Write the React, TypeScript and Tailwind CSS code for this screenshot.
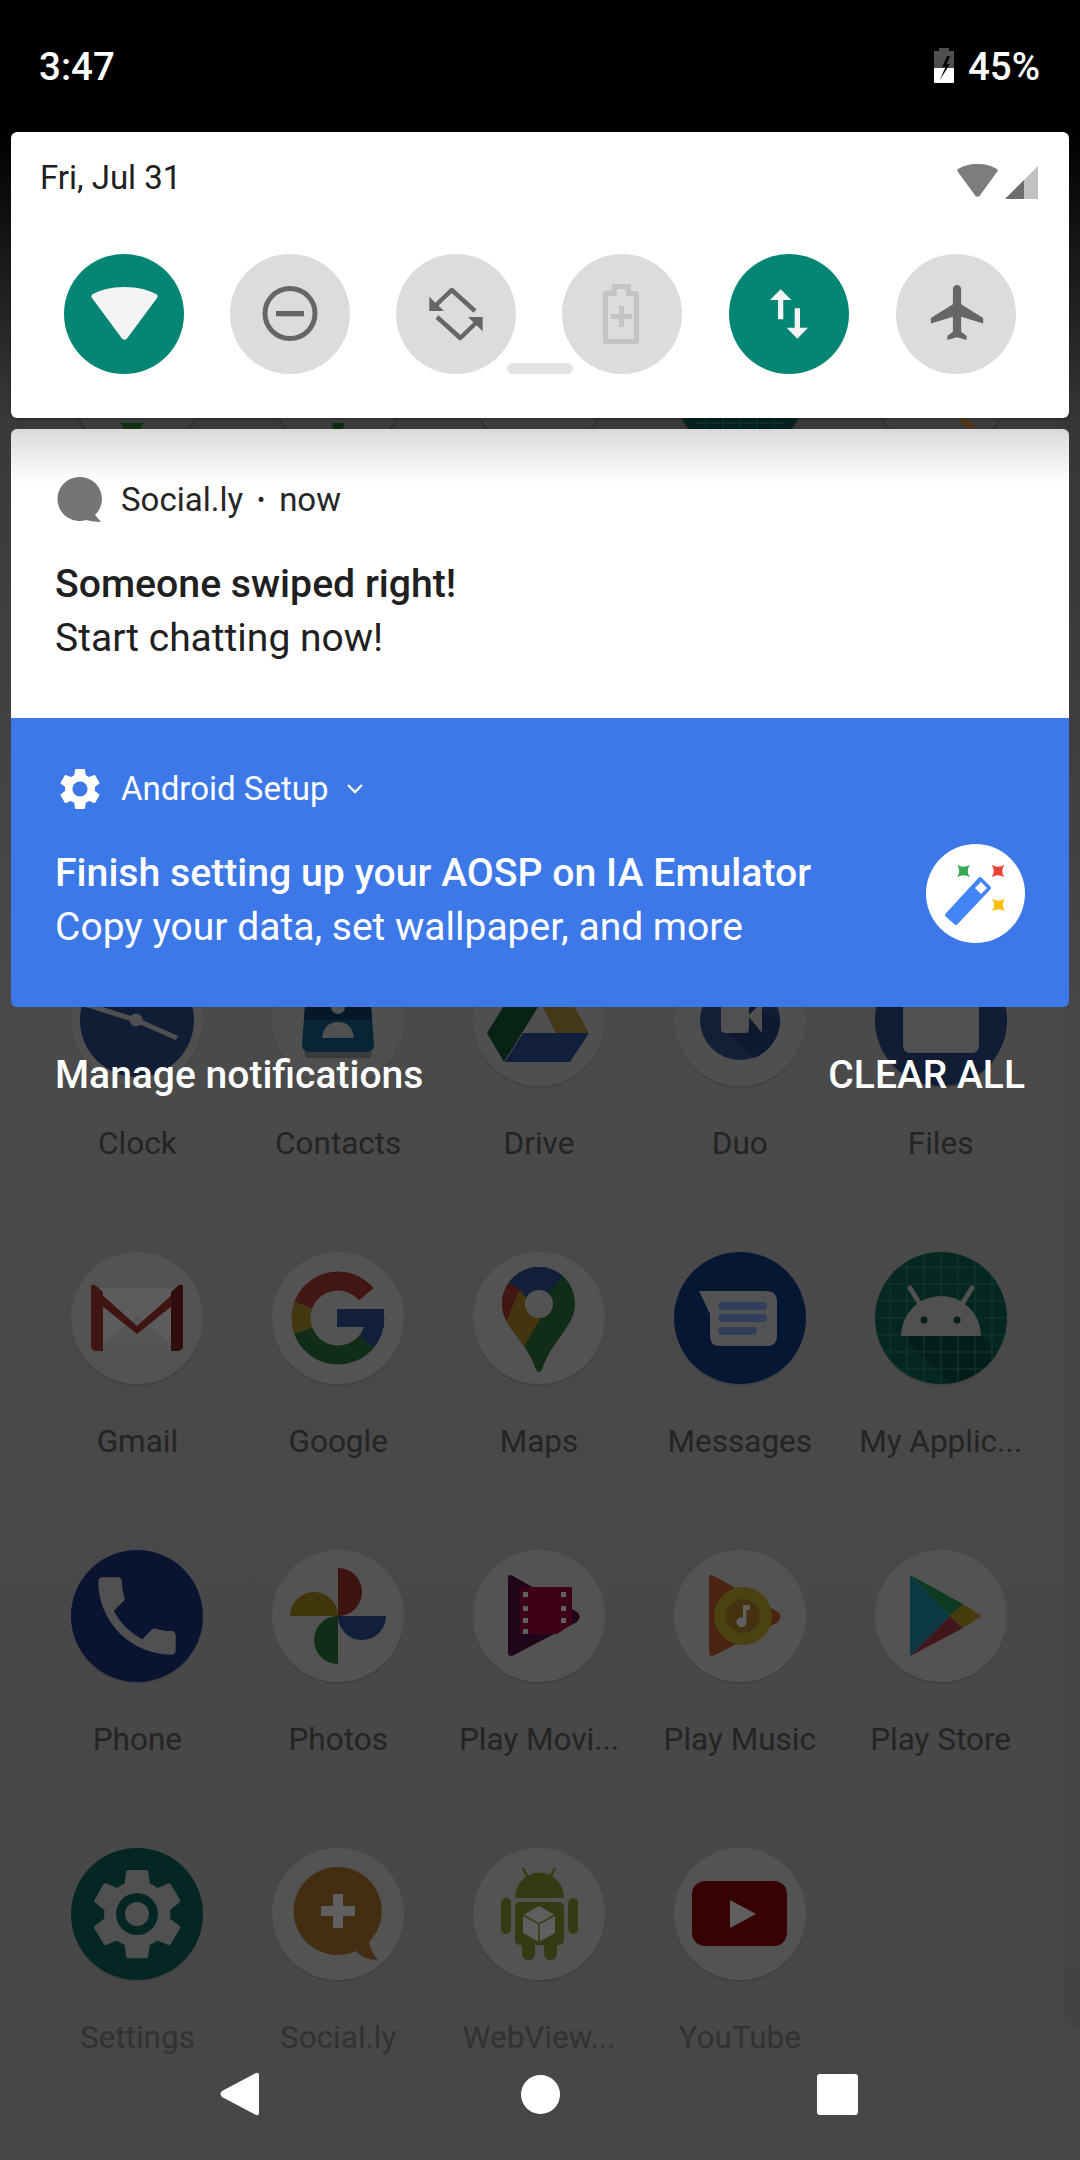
import React from "react";

const GEAR =
  "M19.14 12.94c.04-.3.06-.61.06-.94 0-.32-.02-.64-.07-.94l2.03-1.58c.18-.14.23-.41.12-.61l-1.92-3.32c-.12-.22-.37-.29-.59-.22l-2.39.96c-.5-.38-1.03-.7-1.62-.94l-.36-2.54c-.04-.24-.24-.41-.48-.41h-3.84c-.24 0-.43.17-.47.41l-.36 2.54c-.59.24-1.13.57-1.62.94l-2.39-.96c-.22-.08-.47 0-.59.22L2.74 8.87c-.12.21-.08.47.12.61l2.03 1.58c-.05.3-.09.63-.09.94s.02.64.07.94l-2.03 1.58c-.18.14-.23.41-.12.61l1.92 3.32c.12.22.37.29.59.22l2.39-.96c.5.38 1.03.7 1.62.94l.36 2.54c.05.24.24.41.48.41h3.84c.24 0 .44-.17.47-.41l.36-2.54c.59-.24 1.13-.56 1.62-.94l2.39.96c.22.08.47 0 .59-.22l1.92-3.32c.12-.22.07-.47-.12-.61l-2.01-1.58zM12 15.6c-1.98 0-3.6-1.62-3.6-3.6s1.62-3.6 3.6-3.6 3.6 1.62 3.6 3.6-1.62 3.6-3.6 3.6z";

const DISC = "#626262";
const ROW1 = "#5d5d5d";
const GLYPH = "#5e5e5e";
const LIGHT = "#707070";

function Icon({ children, disc = DISC }: { children?: React.ReactNode; disc?: string }) {
  return (
    <svg viewBox="0 0 132 136" className="h-[136px] w-[132px] shrink-0 brightness-[0.85] saturate-[0.85]">
      <circle cx="66" cy="68" r="66" fill="#000" opacity="0.1" />
      <circle cx="66" cy="66" r="66" fill={disc} />
      {children}
    </svg>
  );
}

const icons: Record<string, React.ReactNode> = {
  Clock: (
    <Icon disc={ROW1}>
      <circle cx="66" cy="66" r="57" fill="#112244" />
      <path d="M0 46 L65 66 L106 84" stroke={GLYPH} strokeWidth="5" fill="none" />
      <circle cx="65" cy="66" r="6.5" fill={GLYPH} />
    </Icon>
  ),
  Contacts: (
    <Icon disc={ROW1}>
      <path d="M37 0 H95 L102 90 Q102 98 95 98 H37 Q30 98 30 90 Z" fill="#042d45" />
      <path d="M37 0 H95 L100 66 H32 Z" fill="#041d31" />
      <path d="M32 98 H100 L98 104 H34 Z" fill="#444" />
      <circle cx="66" cy="53" r="7" fill={GLYPH} />
      <path d="M50 84 Q52 68 66 68 Q80 68 82 84 Z" fill={GLYPH} />
    </Icon>
  ),
  Drive: (
    <Icon disc={ROW1}>
      <polygon points="52,18 14,79 31,108 70,45" fill="#052918" />
      <polygon points="52,18 82,18 116,79 83,79" fill="#534214" />
      <polygon points="32,108 97,108 116,79 50,79" fill="#11254a" />
    </Icon>
  ),
  Duo: (
    <Icon disc={ROW1}>
      <circle cx="66" cy="66" r="40" fill="#132546" />
      <path d="M76 50 L106 66 A40 40 0 0 1 80 104 L50 76 Z" fill="#0e1e3c" />
      <rect x="47" y="46" width="28" height="33" rx="4" fill={GLYPH} />
      <polygon points="74,62 88,48 88,79" fill={GLYPH} />
    </Icon>
  ),
  Files: (
    <Icon disc="#112244">
      <rect x="28" y="30" width="76" height="69" rx="7" fill={GLYPH} />
    </Icon>
  ),
  Gmail: (
    <Icon>
      <rect x="24" y="36" width="84" height="62" fill="#6c6c6c" />
      <polygon points="24,98 66,64 108,98" fill="#646464" />
      <path d="M20 33 L66 74 L112 33 V45 L66 82 L20 45 Z" fill="#531613" />
      <path d="M20 36 Q20 32 24 33 L32 40 V99 H26 Q20 99 20 93 Z" fill="#531613" />
      <path d="M112 36 Q112 32 108 33 L100 40 V99 H106 Q112 99 112 93 Z" fill="#3b0e0c" />
    </Icon>
  ),
  Google: (
    <Icon>
      <g fill="none" strokeWidth="19">
        <path d="M94.3 42.2 A37 37 0 0 0 31.2 53.3" stroke="#541814" />
        <path d="M31.2 53.3 A37 37 0 0 0 31.2 78.7" stroke="#53420c" />
        <path d="M31.2 78.7 A37 37 0 0 0 94.3 89.8" stroke="#103618" />
        <path d="M94.3 89.8 A37 37 0 0 0 103 66" stroke="#11254b" />
      </g>
      <rect x="65" y="57" width="47" height="18" fill="#11254b" />
    </Icon>
  ),
  Maps: (
    <Icon>
      <defs>
        <clipPath id="pin">
          <path d="M66 15 C45 15 29 32 29 52 C29 75 55 90 63 118 Q66 122 69 118 C77 90 102 75 102 52 C102 32 87 15 66 15Z" />
        </clipPath>
      </defs>
      <g clipPath="url(#pin)">
        <rect x="20" y="0" width="100" height="130" fill="#103618" />
        <polygon points="20,0 110,0 60,60 30,35" fill="#11254a" />
        <polygon points="20,20 50,40 38,80 20,80" fill="#541814" />
        <polygon points="46,38 70,62 50,96 30,78" fill="#533e09" />
      </g>
      <circle cx="66" cy="52" r="14" fill={DISC} />
    </Icon>
  ),
  Messages: (
    <Icon disc="#041b42">
      <path d="M25 39 H92 Q103 39 103 50 V84 Q103 94 93 94 H46 Q36 94 36 84 V62 Z" fill={DISC} />
      <rect x="44" y="50" width="49" height="8" rx="4" fill="#384a70" />
      <rect x="44" y="62" width="49" height="8" rx="4" fill="#384a70" />
      <rect x="44" y="75" width="39" height="8" rx="4" fill="#384a70" />
    </Icon>
  ),
  "My Applic...": (
    <Icon disc="#002f28">
      <defs>
        <clipPath id="gridClip">
          <circle cx="66" cy="66" r="66" />
        </clipPath>
      </defs>
      <g clipPath="url(#gridClip)">
        <path d="M26 84 L74 132 H132 V110 L106 84 Z" fill="#002620" />
        <g stroke="#15453d" strokeWidth="1">
          <path d="M15 0 V132 M32 0 V132 M49 0 V132 M66 0 V132 M83 0 V132 M100 0 V132 M117 0 V132" />
          <path d="M0 15 H132 M0 32 H132 M0 49 H132 M0 66 H132 M0 83 H132 M0 100 H132 M0 117 H132" />
        </g>
      </g>
      <path d="M26 84 A40 40 0 0 1 106 84 Z" fill={GLYPH} />
      <path d="M35 36 L45 52 M97 36 L87 52" stroke={GLYPH} strokeWidth="5" strokeLinecap="round" />
      <circle cx="49" cy="68" r="3.5" fill="#002620" />
      <circle cx="82" cy="68" r="3.5" fill="#002620" />
    </Icon>
  ),
  Phone: (
    <Icon disc="#0a1840">
      <g transform="translate(14.4 14.4) scale(4.3)">
        <path
          fill={GLYPH}
          d="M6.62 10.79c1.44 2.83 3.76 5.14 6.59 6.59l2.2-2.2c.27-.27.67-.36 1.02-.24 1.12.37 2.33.57 3.57.57.55 0 1 .45 1 1V20c0 .55-.45 1-1 1-9.39 0-17-7.61-17-17 0-.55.45-1 1-1h3.5c.55 0 1 .45 1 1 0 1.25.2 2.45.57 3.57.11.35.03.74-.25 1.02l-2.2 2.2z"
        />
      </g>
    </Icon>
  ),
  Photos: (
    <Icon>
      <path d="M66 66 V18 A24 24 0 0 1 66 66Z" fill="#4f1610" />
      <path d="M66 66 H114 A24 24 0 0 1 66 66Z" fill="#11254b" />
      <path d="M66 66 V114 A24 24 0 0 1 66 66Z" fill="#0f3618" />
      <path d="M66 66 H18 A24 24 0 0 1 66 66Z" fill="#4f3e04" />
    </Icon>
  ),
  "Play Movi...": (
    <Icon>
      <path d="M35 29 Q35 23 40 26 L104 62 Q109 66 104 72 L41 105 Q35 108 35 102 Z" fill="#2a0620" />
      <polygon points="47,37 99,37 99,74 84,84 47,84" fill="#52001b" />
      <g fill={LIGHT}>
        <rect x="50" y="42" width="5" height="5" />
        <rect x="50" y="56" width="5" height="5" />
        <rect x="50" y="68" width="5" height="5" />
        <rect x="50" y="79" width="5" height="5" />
        <rect x="88" y="42" width="5" height="5" />
        <rect x="88" y="56" width="5" height="5" />
        <rect x="88" y="68" width="5" height="5" />
      </g>
    </Icon>
  ),
  "Play Music": (
    <Icon>
      <path d="M35 29 Q35 23 40 26 L104 62 Q109 66 104 72 L41 105 Q35 108 35 102 Z" fill="#5f2810" />
      <circle cx="69" cy="66" r="29" fill="#5b4e0c" />
      <circle cx="69" cy="66" r="17" fill="#533a0c" />
      <path d="M69 55 H76 V60 H72.5 V72 A5 5 0 1 1 69 67.5 Z" fill={LIGHT} />
    </Icon>
  ),
  "Play Store": (
    <Icon>
      <polygon points="35,25 35,106 75,66" fill="#044553" />
      <polygon points="35,25 88,54 75,66" fill="#084625" />
      <polygon points="35,106 75,66 88,78" fill="#541821" />
      <polygon points="75,66 88,54 107,66 88,78" fill="#534606" />
    </Icon>
  ),
  Settings: (
    <Icon disc="#002f2c">
      <g transform="translate(11 11) scale(4.6)">
        <path fill={GLYPH} d={GEAR} />
      </g>
      <circle cx="66" cy="66" r="21" fill="#002f2c" />
      <circle cx="66" cy="66" r="12" fill={GLYPH} />
    </Icon>
  ),
  "Social.ly": (
    <Icon>
      <path d="M66 19 A44 44 0 0 1 97 94 Q100 106 106 112 Q92 112 84 103 A44 44 0 1 1 66 19Z" fill="#53350f" />
      <rect x="49" y="58" width="34" height="10" fill={LIGHT} />
      <rect x="61" y="46" width="10" height="34" fill={LIGHT} />
    </Icon>
  ),
  "WebView...": (
    <Icon>
      <path d="M50 20 L55 30 M82 20 L77 30" stroke="#3b460e" strokeWidth="2.5" />
      <path d="M42 50 A24 25 0 0 1 91 50 Z" fill="#3b460e" />
      <rect x="42" y="54" width="49" height="43" rx="5" fill="#3b460e" />
      <rect x="28" y="50" width="10" height="36" rx="5" fill="#3b460e" />
      <rect x="95" y="50" width="10" height="36" rx="5" fill="#3b460e" />
      <rect x="49" y="90" width="13" height="22" rx="6" fill="#3b460e" />
      <rect x="71" y="90" width="13" height="22" rx="6" fill="#3b460e" />
      <polygon points="66,58 82,67 82,85 66,94 50,85 50,67" fill={LIGHT} />
      <path d="M50 67 L66 76 L82 67 M66 76 V94" stroke="#3b460e" strokeWidth="1.5" fill="none" />
    </Icon>
  ),
  YouTube: (
    <Icon>
      <rect x="18" y="33" width="95" height="65" rx="13" fill="#4a0000" />
      <polygon points="56,52 82,66 56,80" fill={LIGHT} />
    </Icon>
  ),
};

const rows = [
  ["Clock", "Contacts", "Drive", "Duo", "Files"],
  ["Gmail", "Google", "Maps", "Messages", "My Applic..."],
  ["Phone", "Photos", "Play Movi...", "Play Music", "Play Store"],
  ["Settings", "Social.ly", "WebView...", "YouTube"],
];

function AppCell({ name, faded }: { name: string; faded: boolean }) {
  return (
    <div className="flex h-[298px] flex-col items-center">
      {icons[name]}
      <span
        className={`mt-[32px] whitespace-nowrap text-[31.5px] leading-[44px] ${faded ? "text-[#323232]" : "text-[#242424]"}`}
      >
        {name}
      </span>
    </div>
  );
}

function PeekDisc({ fill, children }: { fill: string; children?: React.ReactNode }) {
  return (
    <svg viewBox="0 0 132 136" className="h-[136px] w-[132px]">
      <circle cx="66" cy="67" r="66" fill="#2f2f2f" />
      <circle cx="66" cy="66" r="65" fill={fill} />
      {children}
    </svg>
  );
}

function Launcher() {
  return (
    <div className="absolute inset-0 overflow-hidden pl-[37px] pt-[323px]">
      <div className="mb-[495px] grid w-[1004px] grid-cols-5 justify-items-center">
        <PeekDisc fill="#3c3c3c">
          <path d="M50 100 L72 100 L66 118 L56 114 Z" fill="#0e3013" />
        </PeekDisc>
        <PeekDisc fill="#3c3c3c">
          <path d="M60 100 L72 100 L67 130 Z" fill="#092d10" />
        </PeekDisc>
        <PeekDisc fill="#3c3c3c" />
        <PeekDisc fill="#02211e">
          <g stroke="#123630" strokeWidth="1">
            <path d="M32 90 V130 M49 90 V130 M66 90 V132 M83 90 V130 M100 90 V130 M20 100 H112 M20 110 H112 M20 120 H112" />
          </g>
        </PeekDisc>
        <PeekDisc fill="#3c3c3c">
          <path d="M84 94 L100 102 L97 106 L86 100 Z" fill="#53350f" />
        </PeekDisc>
      </div>
      {rows.map((row, i) => (
        <div key={i} className="grid w-[1004px] grid-cols-5">
          {row.map((n) => (
            <AppCell key={n} name={n} faded={i === 3} />
          ))}
        </div>
      ))}
      <div className="absolute right-0 top-[263px] h-[1765px] w-[16px] rounded-l-[10px] bg-black/5" />
    </div>
  );
}

function Tile({ on, className = "", children }: { on?: boolean; className?: string; children: React.ReactNode }) {
  return (
    <div
      className={`flex h-[120px] w-[120px] items-center justify-center rounded-full ${on ? "bg-[#058675]" : "bg-[#dcdcdc]"} ${className}`}
    >
      <svg viewBox="0 0 120 120" className="h-[120px] w-[120px]">
        {children}
      </svg>
    </div>
  );
}

function QuickPanel() {
  return (
    <div className="relative h-[286px] rounded-[6px] bg-white shadow-[0_1px_3px_rgba(0,0,0,0.3)]">
      <div className="flex h-[122px] items-start justify-between pl-[29px] pr-[31px]">
        <span className="mt-[24px] text-[33px] leading-[44px] text-[#202020]">Fri, Jul 31</span>
        <div className="mt-[32px] flex items-end gap-[7px]">
          <svg viewBox="0 0 41 33" className="mb-[2px] h-[33px] w-[41px]">
            <path
              d="M20.5 0 C12 0 6 2 1 5 Q-0.5 6 1 8 L18.5 32 Q20.5 33.5 22.5 32 L40 8 Q41.5 6 40 5 C35 2 29 0 20.5 0Z"
              fill="#7d7d7d"
            />
          </svg>
          <svg viewBox="0 0 33 33" className="h-[33px] w-[33px]">
            <polygon points="0,33 33,0 33,33" fill="#c2c2c2" />
            <polygon points="0,33 19,14 19,33" fill="#6e6e6e" />
          </svg>
        </div>
      </div>
      <div className="flex gap-[46px] pl-[53px]">
        <Tile on>
          <path
            d="M60.5 33 C47 33 36 36 28 40.5 Q26.5 42 28 44 L58 84.5 Q60.5 87 63 84.5 L93 44 Q94.5 42 93 40.5 C85 36 74 33 60.5 33Z"
            fill="#f4f4f4"
          />
        </Tile>
        <Tile>
          <circle cx="60" cy="59.5" r="25" fill="none" stroke="#666" strokeWidth="5" />
          <rect x="46" y="57" width="28" height="5.3" fill="#666" />
        </Tile>
        <Tile>
          <path d="M36 55 L55.7 36 L79 57" fill="none" stroke="#666" strokeWidth="4.5" strokeLinejoin="round" />
          <polygon points="33.3,42.7 33.3,57 48,57" fill="#666" />
          <path d="M41 63 L64.3 84 L84 65" fill="none" stroke="#666" strokeWidth="4.5" strokeLinejoin="round" />
          <polygon points="86.7,77.3 86.7,63 72,63" fill="#666" />
        </Tile>
        <Tile>
          <path
            d="M49.7 30 H69 V37 H74 Q77 37 77 40 V87 Q77 90 74 90 H44 Q41 90 41 87 V40 Q41 37 44 37 H49.7 Z M46 42 V85 H72 V42 Z M54.7 35 V42 H64 V35 Z"
            fill="#c4c4c4"
            fillRule="evenodd"
          />
          <rect x="49" y="60" width="21" height="5" fill="#c4c4c4" />
          <rect x="57" y="52" width="5" height="21" fill="#c4c4c4" />
        </Tile>
        <Tile on className="ml-[1px]">
          <polygon points="51.7,35.3 41,46 49,46 49,65.3 54.3,65.3 54.3,46 62.3,46" fill="#f4f4f4" />
          <polygon points="65.7,54.3 71,54.3 71,73.7 79,73.7 68.3,84.7 57.7,73.7 65.7,73.7" fill="#f4f4f4" />
        </Tile>
        <Tile className="ml-[1px]">
          <g transform="translate(29.4 25.5) scale(2.75)">
            <path
              fill="#666"
              d="M21 16v-2l-8-5V3.5c0-.83-.67-1.5-1.5-1.5S10 2.67 10 3.5V9l-8 5v2l8-2.5V19l-2 1.5V22l3.5-1 3.5 1v-1.5L13 19v-5.5l8 2.5z"
            />
          </g>
        </Tile>
      </div>
      <div className="absolute bottom-[44px] left-[496px] h-[11px] w-[66px] rounded-full bg-[#e3e3e3]" />
    </div>
  );
}

function NotificationCards() {
  return (
    <div className="mt-[11px] h-[578px] overflow-hidden rounded-[6px]">
      <div className="h-[289px] bg-[linear-gradient(to_bottom,#d9d9d9_0px,#f6f6f6_40px,#ffffff_55px)] pl-[44px] pt-[44px] text-[#202020]">
        <div className="flex h-[54px] items-center">
          <svg viewBox="0 0 50 50" className="h-[50px] w-[50px]">
            <path d="M25 2 A22 22 0 0 1 40 40 L46 47 Q38 47 31 45 A22 22 0 1 1 25 2Z" fill="#757575" />
          </svg>
          <span className="ml-[16px] text-[33px] leading-[44px] text-[#262626]">Social.ly</span>
          <span className="mx-[14px] text-[24px] leading-[44px] text-[#262626]">•</span>
          <span className="text-[33px] leading-[44px] text-[#262626]">now</span>
        </div>
        <div className="pt-[30px]">
          <p className="text-[39.2px] font-medium leading-[54px]">Someone swiped right!</p>
          <p className="text-[39px] leading-[54px]">Start chatting now!</p>
        </div>
      </div>
      <div className="h-[289px] bg-[#3c78e8] pl-[44px] pt-[44px] text-white">
        <div className="flex h-[54px] items-center">
          <svg viewBox="0 0 24 24" className="h-[50px] w-[50px]">
            <path fill="#fff" d={GEAR} />
          </svg>
          <span className="ml-[16px] text-[33px] leading-[44px]">Android Setup</span>
          <svg viewBox="0 0 18 12" className="ml-[18px] h-[12px] w-[18px]">
            <path d="M2 2 L9 9 L16 2" fill="none" stroke="#fff" strokeWidth="2.4" />
          </svg>
        </div>
        <div className="flex items-center justify-between pr-[44px] pt-[28px]">
          <div>
            <p className="text-[39.2px] font-medium leading-[54px]">Finish setting up your AOSP on IA Emulator</p>
            <p className="text-[39px] leading-[54px]">Copy your data, set wallpaper, and more</p>
          </div>
          <svg viewBox="0 0 99 99" className="mb-[12px] h-[99px] w-[99px]">
            <circle cx="49.5" cy="49.5" r="49.5" fill="#fff" />
            <path transform="translate(37.5 27) rotate(45) scale(0.75)" d="M0 -12 Q2 -2 12 0 Q2 2 0 12 Q-2 2 -12 0 Q-2 -2 0 -12Z" fill="#34a853" />
            <path transform="translate(72 27) rotate(45) scale(0.75)" d="M0 -12 Q2 -2 12 0 Q2 2 0 12 Q-2 2 -12 0 Q-2 -2 0 -12Z" fill="#ea4335" />
            <path transform="translate(72.5 61) rotate(45) scale(0.75)" d="M0 -12 Q2 -2 12 0 Q2 2 0 12 Q-2 2 -12 0 Q-2 -2 0 -12Z" fill="#fbbc04" />
            <polygon points="21,71 30,79 63,44 54,35" fill="#4285f4" stroke="#4285f4" strokeWidth="4" strokeLinejoin="round" />
            <polygon points="55,38 61,44 55,50 49,44" fill="#fff" />
          </svg>
        </div>
      </div>
    </div>
  );
}

export default function App() {
  return (
    <div
      className="relative h-[2160px] w-[1080px] overflow-hidden bg-[linear-gradient(to_bottom,#000000_132px,#393939_420px,#4a4a4a_1010px,#474747_2160px)]"
      style={{ fontFamily: "Roboto, 'Noto Sans', sans-serif" }}
    >
      <Launcher />
      <div className="absolute inset-0 flex flex-col">
        <div className="flex h-[132px] shrink-0 items-start justify-between bg-black pl-[39px] pr-[40px] pt-[44px] text-white">
          <span className="text-[38.5px] font-medium leading-[46px]">3:47</span>
          <div className="flex items-start">
            <svg viewBox="0 0 20 35" className="mt-[4px] h-[35px] w-[20px]">
              <rect x="5" y="0" width="10" height="4" fill="#4f4f4f" />
              <rect x="0" y="3" width="20" height="18" fill="#4f4f4f" />
              <path d="M0 20 H20 V34 Q20 35 19 35 H1 Q0 35 0 34 Z" fill="#fff" />
              <polygon points="13.3,8 8.3,18.7 11.7,18.7 5.7,32 16,16 12.7,16 16,8" fill="#000" />
            </svg>
            <span className="ml-[14px] text-[38.5px] font-medium leading-[46px]">45%</span>
          </div>
        </div>
        <div className="px-[11px]">
          <QuickPanel />
          <NotificationCards />
        </div>
        <div className="mt-[41px] flex h-[54px] items-center justify-between pl-[55px] pr-[55px] text-[39px] font-medium leading-[54px] text-white">
          <span>Manage notifications</span>
          <span>CLEAR ALL</span>
        </div>
        <div className="mt-auto flex h-[132px] items-center pl-[220px]">
          <svg viewBox="0 0 39 44" className="h-[44px] w-[39px]">
            <path d="M36 1 Q39 0 39 3 V41 Q39 44 36 43 L2 25 Q-1 22 2 19 Z" fill="#fff" />
          </svg>
          <div className="ml-[262px] h-[39px] w-[39px] rounded-full bg-white" />
          <div className="ml-[257px] h-[41px] w-[41px] rounded-[3px] bg-white" />
        </div>
      </div>
    </div>
  );
}
